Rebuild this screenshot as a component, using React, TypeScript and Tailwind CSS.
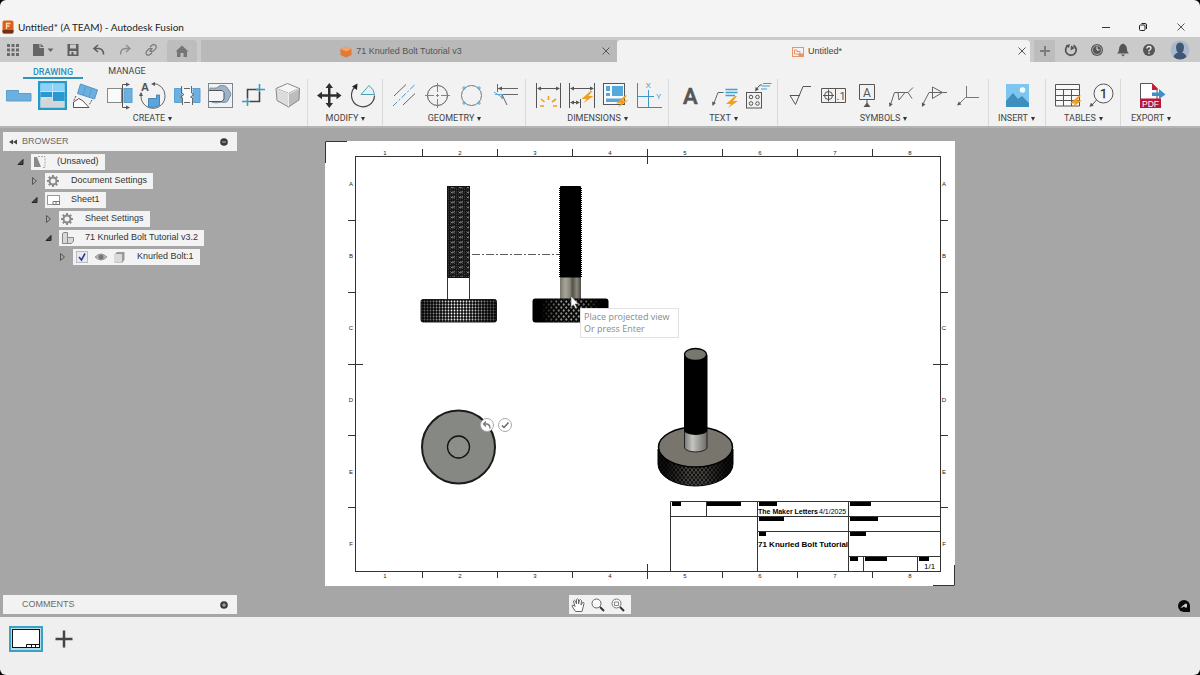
import { useState } from 'react'
import type { ReactNode } from 'react'

const ink = '#555'
const blue = '#5aa9dc'
const orange = '#f0a020'

const Glyph = ({ children }: { children: ReactNode }) => (
  <svg
    viewBox="0 0 34 34"
    className="h-[34px] w-[34px]"
    fill="none"
    stroke={ink}
    strokeWidth="1">
    {children}
  </svg>
)

const Bolt = ({ x, y }: { x: number; y: number }) => (
  <path
    transform={`translate(${x} ${y})`}
    d="M3 -6 L-6 2 L-1 2 L-4 6 L6 -1 L1 -1 L5 -6 Z"
    fill={orange}
    stroke="none"
  />
)

const Head = ({ x, y, r }: { x: number; y: number; r: number }) => (
  <path
    transform={`translate(${x} ${y}) rotate(${r})`}
    d="M0 0 L-4 -2 L-4 2 Z"
    fill={ink}
    stroke="none"
  />
)

const ribbonGroups: {
  label: string
  className: string
  tools: { name: string; icon: ReactNode }[]
}[] = [
  {
    label: 'CREATE',
    className: 'pr-px',
    tools: [
      {
        name: 'Base view',
        icon: (
          <path
            d="M6.5 11.5 H18.5 V14.5 H31 V22 H6.5 Z"
            fill="#6bb0e0"
            stroke="#5f9fcc"
          />
        ),
      },
      {
        name: 'Projected view',
        icon: (
          <g stroke="none">
            <rect x="4" y="2" width="29" height="29" fill="#219cca" />
            <rect x="6.5" y="4.5" width="24" height="24" fill="#cfe3ee" />
            <rect x="6.5" y="4.5" width="24" height="9" fill="#8fd0f6" />
            <path d="M6.5 13 H18 V18 H6.5 Z M19 13 H30.5 V22 H19 Z" fill="#2b98d2" />
            <path d="M6.5 21 H12 V19 H18 V22 H30.5 V28.5 H6.5 Z" fill="#d2d6d9" />
            <path d="M18.5 4.5 V19 M6.5 12.5 H30.5" stroke="#c3e5f8" />
          </g>
        ),
      },
      {
        name: 'Auxiliary view',
        icon: (
          <>
            <path
              d="M12.5 5 L29.5 11 L26.5 20 L9.5 14.5 Z"
              fill="#6bb0e0"
              stroke="#5496c4"
            />
            <path d="M18 7 L15 16 M24 9 L21 18" stroke="#5a9cca" />
            <path d="M8 17 L5.5 22 M24 21 L21 26" strokeDasharray="2 1" />
            <path d="M5.5 28.5 V23 L11 19.5 L15 22 L21 28.5 Z" fill="#fff" />
          </>
        ),
      },
      {
        name: 'Section view',
        icon: (
          <>
            <rect x="5.5" y="9.5" width="14" height="14" fill="#fafafa" stroke="#888" />
            <rect x="22" y="9.5" width="8" height="14" fill="#6bb0e0" stroke="#5f9fcc" />
            <path d="M26 5.5 H20.5 V28.5 H26" />
            <Head x={28} y={5.5} r={0} />
            <Head x={28} y={28.5} r={0} />
          </>
        ),
      },
      {
        name: 'Detail view',
        icon: (
          <>
            <path d="M17 4.5 A12 12 0 0 1 29 16.5 A12 12 0 1 1 5.5 14" stroke="#666" />
            <path d="M12.5 19.5 V28 Q18 29.5 23.5 26.5 V16 H20.5 V19.5 Z" fill="#5aa5dc" stroke="#4586b4" />
            <Head x={15} y={5} r={180} />
            <Head x={5} y={13} r={-90} />
            <text x="5" y="12" fontSize="11" fontWeight="700" fill={ink} stroke="none" className="font-['Liberation_Sans',sans-serif]">
              A
            </text>
          </>
        ),
      },
      {
        name: 'Break view',
        icon: (
          <>
            <path d="M4.5 9.5 H12 V23.5 H4.5 Z M22.5 9.5 H30 V23.5 H22.5 Z" fill="#6bb0e0" stroke="#5f9fcc" />
            <rect x="12.5" y="9.5" width="10" height="14" fill="#fafafa" stroke="none" />
            <path d="M11.5 7 V14 L14 15.5 L10.5 18 L12.5 19 V26 M14 9.5 H20 M14 23.5 H20 M21.5 7 V14 L24 15.5 L20.5 18 L22.5 19 V26" stroke="#666" />
          </>
        ),
      },
      {
        name: 'Breakout view',
        icon: (
          <>
            <rect x="4.5" y="4.5" width="24" height="24" stroke="#7c848c" />
            <path d="M6 9 Q14 10 15 7 Q22 5 24 10 Q29 15 25 19 Q24 25 17 23 Q10 25 6 22 Z" fill="#9cb3c8" stroke="#7690a8" />
            <path d="M5 11.5 H18 L20 13.5 V20 L18 22.5 H5" fill="#f4f4f4" />
          </>
        ),
      },
      {
        name: 'Crop view',
        icon: (
          <g strokeWidth="1.6">
            <path d="M9.5 19.5 V10.5 H20.5 M12 22.5 H21.5 V13" stroke="#444" />
            <path d="M4 22.5 H12 M9.5 19.5 V27 M21.5 5 V13 M18 10.5 H27" stroke="#3a9cc0" />
          </g>
        ),
      },
      {
        name: 'Model',
        icon: (
          <g stroke="#888" strokeLinejoin="round">
            <path d="M15.5 4.5 L27.5 9.5 L16.5 14.5 L4 9.5 Z" fill="#f6f6f6" />
            <path d="M4 9.5 L16.5 14.5 V28 L5 21.5 Z" fill="#dcdcdc" />
            <path d="M27.5 9.5 L16.5 14.5 V28 L27 21 Z" fill="#bcbcbc" />
            <path d="M4.500 10 L16.500 14.800 L27 10 M16.500 14.800 V27.500" stroke="#eee" />
          </g>
        ),
      },
    ],
  },
  {
    label: 'MODIFY',
    className: 'pl-1 pr-0.5',
    tools: [
      {
        name: 'Move',
        icon: (
          <g fill="#2e2e2e" stroke="none">
            <path d="M16 8 H18.5 V15.2 H26 V17.8 H18.5 V25 H16 V17.8 H9 V15.2 H16 Z" />
            <path d="M17.3 4 L21 9 H13.5 Z M17.3 29 L21 24 H13.5 Z M5 16.5 L10 12.7 V20.3 Z M29.5 16.5 L24.5 12.7 V20.3 Z" />
          </g>
        ),
      },
      {
        name: 'Rotate',
        icon: (
          <>
            <path d="M28.5 16.5 A11.5 11.5 0 1 1 9 8" stroke="#444" strokeWidth="1.2" />
            <path d="M15 15.5 L23 6.5 Q28 10 28.5 15.5 Z" fill="#e2f2f5" stroke="#4fa0b4" />
            <path d="M11.5 4.5 L11 11 L6 7.5 Z" fill="#222" stroke="none" />
          </>
        ),
      },
    ],
  },
  {
    label: 'GEOMETRY',
    className: 'pl-1 pr-0.5',
    tools: [
      {
        name: 'Centerline',
        icon: (
          <>
            <path d="M7 17 L19 5.5 M16 26 L28 14.5" stroke="#666" />
            <path d="M6 27 L28 5.5" stroke="#3f98c8" strokeDasharray="6 2 2 2" />
          </>
        ),
      },
      {
        name: 'Center mark',
        icon: (
          <>
            <circle cx="16.5" cy="16.5" r="10" />
            <path d="M16.5 4 V29 M4 16.5 H29" stroke="#3f98c8" strokeDasharray="9 2 3 2" />
          </>
        ),
      },
      {
        name: 'Center mark pattern',
        icon: (
          <>
            <circle cx="16.5" cy="16.5" r="10" stroke="#777" />
            <path
              d="M9 7 V11 M7 9 H11 M24 7 V11 M22 9 H26 M9 22 V26 M7 24 H11 M24 22 V26 M22 24 H26"
              stroke={blue}
            />
          </>
        ),
      },
      {
        name: 'Edge extension',
        icon: (
          <>
            <path d="M8.5 5 V13 M9 9.5 H29 M13 15.5 H29 M13 15.5 L18 26 M13 15.5 V20" stroke="#666" />
            <Head x={9} y={9.5} r={180} />
            <path d="M5 13 L14 19 M6 15.5 H14" stroke={blue} />
          </>
        ),
      },
    ],
  },
  {
    label: 'DIMENSIONS',
    className: 'pl-1 pr-0.5',
    tools: [
      {
        name: 'Dimension',
        icon: (
          <>
            <path d="M6.5 4 V29 M30.5 4 V29 M8 9.5 H29" />
            <Head x={7} y={9.5} r={180} />
            <Head x={30} y={9.5} r={0} />
            <path
              d="M10 27 H14 M11 20 L14.5 23 M18.500 17 V21 M22 23 L26 20 M23 27 H27"
              stroke={orange}
              strokeWidth="1.6"
            />
          </>
        ),
      },
      {
        name: 'Auto dimension',
        icon: (
          <>
            <path d="M5.5 4 V29 M30.5 4 V29 M7 9.5 H29 M16.5 20 V29 M8 23.5 H14" />
            <Head x={6} y={9.5} r={180} />
            <Head x={30} y={9.5} r={0} />
            <Head x={6} y={23.5} r={180} />
            <Head x={16} y={23.5} r={0} />
            <Bolt x={23.5} y={18} />
          </>
        ),
      },
      {
        name: 'Arrange dimensions',
        icon: (
          <>
            <rect x="5.5" y="4.5" width="21" height="21" fill="#fafafa" />
            <path
              d="M14 7 H25 V17 H14 Z M8 7 H12 V12 H8 Z M8 14 H12 V17 H8 Z M8 19.5 H25 V23 H8 Z"
              fill="#56a8dc"
              stroke="none"
            />
            <Bolt x={24} y={22.5} />
          </>
        ),
      },
      {
        name: 'Ordinate',
        icon: (
          <>
            <path d="M5.5 4 V28.5 H30" stroke="#777" />
            <path d="M16.5 11 V28 M6 17.5 H22" stroke="#3f98c8" />
            <g fill="#3f9fd0" stroke="none" fontSize="8" className="font-['Liberation_Sans',sans-serif]">
              <text x="13.5" y="9">X</text>
              <text x="24" y="20">Y</text>
            </g>
          </>
        ),
      },
    ],
  },
  {
    label: 'TEXT',
    className: 'pl-1 pr-0.5',
    tools: [
      {
        name: 'Text',
        icon: (
          <text x="10" y="25" fontSize="22" fontWeight="500" fill="#555" stroke="#555" strokeWidth="0.6" className="font-['Roboto',sans-serif]">
            A
          </text>
        ),
      },
      {
        name: 'Leader note',
        icon: (
          <>
            <path d="M7 24 L11 13.5 H16.5" stroke="#666" />
            <Head x={5.5} y={27} r={112} />
            <path d="M18.5 10.5 H30.5 M18.5 13.5 H30.5 M18.5 16.5 H28" stroke="#3fa0d4" strokeWidth="1.6" />
            <Bolt x={25} y={23} />
          </>
        ),
      },
      {
        name: 'Hole note',
        icon: (
          <>
            <rect x="5.5" y="13.5" width="15" height="15.5" />
            <circle cx="10" cy="18" r="1.8" />
            <circle cx="16.5" cy="18" r="1.8" />
            <circle cx="10" cy="24.5" r="1.8" />
            <circle cx="16.5" cy="24.5" r="1.8" />
            <path d="M15.5 10 L19 6 H21" />
            <Head x={14} y={12.5} r={125} />
            <path d="M22 4.5 H30.5 M21 7 H29 M20 10 H26" stroke="#3fa0d4" />
          </>
        ),
      },
    ],
  },
  {
    label: 'SYMBOLS',
    className: 'pl-1 pr-0.5',
    tools: [
      {
        name: 'Surface texture',
        icon: <path d="M8 16.5 H18 M8 16.5 L13.5 25.5 L21 7.5 H29" />,
      },
      {
        name: 'Feature control frame',
        icon: (
          <>
            <path d="M5.5 9.5 H29.5 V23.5 H5.5 Z M19.5 9.5 V23.5 M12.5 10.5 V22.5 M7 16.5 H18" />
            <circle cx="12.5" cy="16.5" r="4" />
            <text x="20.5" y="21" fontSize="11" fill={ink} stroke="none" className="font-['Roboto',sans-serif]">
              .1
            </text>
          </>
        ),
      },
      {
        name: 'Datum identifier',
        icon: (
          <>
            <path d="M9.5 5.5 H24.5 V20.5 H9.5 Z M17 20.5 V26" />
            <path d="M17 23.5 L20.5 28 H13.5 Z" fill={ink} stroke="none" />
            <text x="13" y="17.5" fontSize="12" fill={ink} stroke="none" className="font-['Roboto',sans-serif]">
              A
            </text>
          </>
        ),
      },
      {
        name: 'Welding',
        icon: (
          <>
            <path d="M7 24 L10.5 13.5 H24 L29 8.5 M24 13.5 L28 19.5 M14 13.5 L15 21 L21 13.5" stroke="#666" />
            <Head x={5.5} y={28} r={110} />
          </>
        ),
      },
      {
        name: 'Taper and slope',
        icon: (
          <>
            <path d="M5.5 24 L11 13.5 H29 M14.5 8 V19.5 L24.5 13.5 Z" stroke="#666" />
            <Head x={4} y={28} r={115} />
          </>
        ),
      },
      {
        name: 'Bend identifier',
        icon: (
          <>
            <path d="M8 24 L13.5 18.5 H27 M14.5 7 V18.5" stroke="#777" />
            <Head x={5} y={26.5} r={142} />
          </>
        ),
      },
    ],
  },
  {
    label: 'INSERT',
    className: 'px-[9px]',
    tools: [
      {
        name: 'Image',
        icon: (
          <g stroke="none">
            <rect x="6" y="5" width="23" height="23" fill="#7cc6f0" />
            <circle cx="22.5" cy="11" r="2.8" fill="#f4fbff" />
            <path d="M6 22 L13 14 L18 20 L22 17 L29 24 V28 H6 Z" fill="#3d8fc0" />
          </g>
        ),
      },
    ],
  },
  {
    label: 'TABLES',
    className: 'pl-1 pr-0.5',
    tools: [
      {
        name: 'Table',
        icon: (
          <>
            <path
              d="M5.5 5.5 H29.5 V27 H5.5 Z M5.5 10.5 H29.5 M5.5 16.5 H29.5 M5.5 21.5 H29.5 M13.5 10.5 V27 M21.5 10.5 V27"
              fill="#fafafa"
            />
            <Bolt x={26} y={22.5} />
          </>
        ),
      },
      {
        name: 'Balloon',
        icon: (
          <>
            <circle cx="19.5" cy="14.5" r="9.5" fill="#f6f6f6" />
            <path d="M12.5 21 L8 26" />
            <Head x={5.5} y={28} r={135} />
            <text x="16" y="19" fontSize="13" fill="#333" stroke="#333" strokeWidth="0.3" className="font-['Roboto',sans-serif]">
              1
            </text>
          </>
        ),
      },
    ],
  },
  {
    label: 'EXPORT',
    className: 'px-2.5',
    tools: [
      {
        name: 'Export PDF',
        icon: (
          <>
            <path d="M5.5 4.5 H17 L22 9.5 V22 H5.5 Z" fill="#fff" stroke="#555" />
            <path d="M17 4 L22.5 9.5 V11 H17 Z" fill="#c0203a" stroke="none" />
            <path d="M17 13.5 H24 V10 L30.5 15.5 L24 20 V17 H17 Z" fill="#3f8fc8" stroke="none" />
            <rect x="5" y="19.5" width="21" height="9.5" fill="#b8183a" stroke="none" />
            <text x="7" y="27.5" fontSize="8.5" fill="#fff" stroke="none" className="font-['Liberation_Sans',sans-serif]">
              PDF
            </text>
          </>
        ),
      },
    ],
  },
]

const CloseIcon = () => (
  <svg viewBox="0 0 10 10" className="size-[10px]" stroke="#555" fill="none">
    <path d="M1.5 1.5 L8.5 8.5 M8.5 1.5 L1.5 8.5" />
  </svg>
)

const TitleBar = () => (
  <header className="flex h-[37px] items-end justify-between bg-[#f4f4f4] pl-0.5">
    <div className="flex h-5 items-center gap-1">
      <svg viewBox="0 0 12 14" className="h-[14px] w-3">
        <rect x="0.5" y="0.5" width="11" height="13" rx="2" fill="#d9601c" />
        <path d="M0.5 10 H11.5 V12 Q11.5 13.5 10 13.5 H2 Q0.5 13.5 0.5 12 Z" fill="#7a2f10" />
        <path d="M4.5 9 V3.5 H8.5 M4.5 6 H7.5" stroke="#fbd9b0" strokeWidth="1.3" fill="none" />
      </svg>
      <h1 className="font-['Lato','Open_Sans',sans-serif] text-[10px] text-[#222]">
        Untitled* (A TEAM) - Autodesk Fusion
      </h1>
    </div>
    <div className="flex h-5 items-center">
      <button aria-label="Minimize" className="flex w-[37px] justify-center">
        <svg viewBox="0 0 10 10" className="size-[10px]" stroke="#333" fill="none">
          <path d="M1 5.5 H9" />
        </svg>
      </button>
      <button aria-label="Restore" className="flex w-[37px] justify-center">
        <svg viewBox="0 0 10 10" className="size-[10px]" stroke="#222" fill="none">
          <rect x="1.5" y="3" width="5.5" height="5.5" rx="1" />
          <path d="M3.5 1.5 H7 Q8.5 1.5 8.5 3 V7" />
        </svg>
      </button>
      <button aria-label="Close" className="flex w-[39px] justify-center">
        <CloseIcon />
      </button>
    </div>
  </header>
)

const quickActions: { name: string; className: string; icon: ReactNode }[] = [
  {
    name: 'Show data panel',
    className: 'w-[25px]',
    icon: (
      <path
        d="M2 2 H5 V5 H2 Z M6.5 2 H9.5 V5 H6.5 Z M11 2 H14 V5 H11 Z M2 6.5 H5 V9.5 H2 Z M6.5 6.5 H9.5 V9.5 H6.5 Z M11 6.5 H14 V9.5 H11 Z M2 11 H5 V14 H2 Z M6.5 11 H9.5 V14 H6.5 Z M11 11 H14 V14 H11 Z"
        fill="#6a6a6a"
      />
    ),
  },
  {
    name: 'File',
    className: 'w-[35px]',
    icon: (
      <>
        <path d="M-2 2 H4.5 V6 H9 V14 H-2 Z M5.5 1.5 L9 5 H5.5 Z" fill="#666" />
        <path d="M12.500 6.5 H18.500 L15.500 10 Z" fill="#666" />
      </>
    ),
  },
  {
    name: 'Save',
    className: 'w-[26px]',
    icon: (
      <path
        d="M2.5 2 H13.5 V14 H2.5 Z M5 2.5 V6.5 H11 V2.5 Z M4.5 9 V12.5 H11.5 V9 Z M6.5 10 H8.5 V12.5 H6.5 Z"
        fillRule="evenodd"
        fill="#5e5e5e"
      />
    ),
  },
  {
    name: 'Undo',
    className: 'w-[26px]',
    icon: (
      <path
        d="M7 3 L3 6.5 L7 10 M3.500 6.5 H8 Q12.500 7 12.500 12.500"
        stroke="#5e5e5e"
        strokeWidth="1.6"
      />
    ),
  },
  {
    name: 'Redo',
    className: 'w-[26px]',
    icon: (
      <path
        d="M9 3 L13 6.5 L9 10 M12.5 6.5 H8 Q3.5 7 3.5 12.5"
        stroke="#8a8a8a"
        strokeWidth="1.3"
      />
    ),
  },
  {
    name: 'Link',
    className: 'w-[26px]',
    icon: (
      <path
        d="M6.5 9.5 L9.5 6.5 M7 5 L9.5 2.8 Q11.5 2 13 3.8 Q13.8 5.5 12.5 6.8 L10 9.3 Q8.5 10 7.5 9 M9 7 Q7.5 5.8 6 6.8 L3.5 9.3 Q2.2 10.8 3.5 12.5 Q5 13.8 6.7 12.8 L9 10.8"
        stroke="#777"
        strokeWidth="1.2"
      />
    ),
  },
]

const accountActions: { name: string; icon: ReactNode }[] = [
  {
    name: 'Extensions',
    icon: (
      <>
        <path d="M10.500 3.300 A5.3 5.3 0 1 1 5 3.500" stroke="#555" strokeWidth="1.8" />
        <path d="M7.500 8.500 L8 3.500 L12 6 Z M2.500 3.500 L7 2 L6 6 Z" fill="#555" />
      </>
    ),
  },
  {
    name: 'Job status',
    icon: (
      <>
        <circle cx="8" cy="8" r="6" fill="#555" />
        <circle cx="8" cy="8" r="4.5" stroke="#bbb" strokeWidth="0.8" />
        <path d="M8 4.5 V8 H10.5" stroke="#e8e8e8" />
      </>
    ),
  },
  {
    name: 'Notifications',
    icon: (
      <path
        d="M8 1.5 Q12 3 12 7.5 Q12 10 14 11.5 H2 Q4 10 4 7.5 Q4 3 8 1.5 Z M6 12.5 H10 L8 14.5 Z"
        fill="#555"
      />
    ),
  },
  {
    name: 'Help',
    icon: (
      <>
        <circle cx="8" cy="8" r="6" fill="#555" />
        <path d="M6 6.5 Q6 4.5 8 4.5 Q10 4.5 10 6.2 Q10 7.5 8 8.5 V9.5 M8 10.5 V12" stroke="#eee" strokeWidth="1.3" />
      </>
    ),
  },
]

const DocumentTabs = () => (
  <nav className="flex h-[25px] bg-[#cacaca] font-['Liberation_Sans',sans-serif] text-[9px] text-[#555]">
    <div className="flex w-[167px] shrink-0 items-center">
      {quickActions.map((a) => (
        <button
          key={a.name}
          aria-label={a.name}
          className={`flex justify-center ${a.className}`}>
          <svg viewBox="0 0 16 16" className="size-4 overflow-visible" fill="none">
            {a.icon}
          </svg>
        </button>
      ))}
    </div>
    <button
      aria-label="Home"
      className="mt-[3px] mr-1 flex w-[30px] shrink-0 items-center justify-center rounded-t-sm bg-[#bdbdbd]">
      <svg viewBox="0 0 16 16" className="size-4" fill="#757575">
        <path d="M8 2.5 L14.5 8.5 H13 V14 H9.5 V10 H6.5 V14 H3 V8.5 H1.5 Z" />
      </svg>
    </button>
    <div className="mt-[3px] flex flex-1 items-center bg-[#b9b9b9] pr-1.5">
      <button className="flex flex-1 items-center justify-center gap-1 pt-0.5">
        <svg viewBox="0 0 12 12" className="size-3">
          <path d="M6 0.5 L11.5 3 V9 L6 11.5 L0.5 9 V3 Z" fill="#e07a34" />
          <path d="M6 0.5 L11.5 3 L6 5.5 L0.5 3 Z" fill="#f2a468" />
        </svg>
        71 Knurled Bolt Tutorial v3
      </button>
      <button aria-label="Close 71 Knurled Bolt Tutorial v3">
        <CloseIcon />
      </button>
    </div>
    <div className="mt-[3px] flex flex-1 items-center rounded-t-sm bg-[#f2f2f2] pr-[3px]">
      <button className="flex flex-1 items-center justify-center gap-1 pt-0.5 text-[#444]">
        <svg viewBox="0 0 12 12" className="size-3" fill="none" stroke="#e89468">
          <rect x="0.5" y="1.5" width="11" height="9" />
          <path d="M2.5 8 V4 H5 V5.5 H8 V8 Z" />
          <path d="M7 8 H11 V10 H7 Z" fill="#e89468" />
        </svg>
        Untitled*
      </button>
      <button aria-label="Close Untitled">
        <CloseIcon />
      </button>
    </div>
    <div className="flex w-[170px] shrink-0 items-center">
      <button
        aria-label="New tab"
        className="mt-[3px] ml-1 flex h-[22px] w-[21px] items-center justify-center self-end bg-[#bdbdbd]">
        <svg viewBox="0 0 12 12" className="size-3" stroke="#7c7c7c" strokeWidth="2">
          <path d="M6 1 V11 M1 6 H11" />
        </svg>
      </button>
      <div className="ml-[3px] flex flex-1">
        {accountActions.map((a) => (
          <button key={a.name} aria-label={a.name} className="flex w-[26px] justify-center">
            <svg viewBox="0 0 16 16" className="size-4" fill="none">
              {a.icon}
            </svg>
          </button>
        ))}
      </div>
      <button aria-label="Account" className="mr-2.5">
        <svg viewBox="0 0 20 20" className="size-5">
          <circle cx="10" cy="10" r="9.5" fill="#a9b9cc" />
          <path d="M10 2.5 Q14 3 14 7.5 Q14 11 12 12.5 Q16 14 16.5 17 Q10 22 3.5 17 Q4 14 8 12.5 Q6 11 6 7.5 Q6 3 10 2.5 Z" fill="#3f5674" />
        </svg>
      </button>
    </div>
  </nav>
)

const Ribbon = () => {
  const [active, setActive] = useState('Projected view')

  return (
    <section className="flex h-[66px] flex-col border-b-2 border-[#b4b4b4] bg-[#f2f2f2] font-['Roboto',sans-serif] text-[9px] text-[#444]">
      <div className="flex h-[17px] gap-5 pl-[23px]">
        <button className="w-[60px] border-b-2 border-[#2f93ba] pt-1 font-medium text-[#2f93ba]">
          DRAWING
        </button>
        <button className="w-12 pt-0.5">MANAGE</button>
      </div>
      <div className="flex flex-1">
        {ribbonGroups.map((g) => (
          <div
            key={g.label}
            className={`flex flex-col items-center border-r border-[#dadada] last:border-r-0 ${g.className}`}>
            <div className="flex">
              {g.tools.map((t) => (
                <button
                  key={t.name}
                  aria-label={t.name}
                  aria-pressed={active === t.name}
                  onClick={() => setActive(t.name)}>
                  <Glyph>{t.icon}</Glyph>
                </button>
              ))}
            </div>
            <button className="flex h-[11px] items-center gap-0.5">
              {g.label}
              <svg viewBox="0 0 6 6" className="size-[6px]" fill="#333">
                <path d="M1 1 H5 L3 5 Z" />
              </svg>
            </button>
          </div>
        ))}
      </div>
    </section>
  )
}

const GearIcon = (
  <>
    <circle cx="8" cy="8" r="3.5" stroke="#8a8a8a" strokeWidth="2" />
    <path
      d="M8 2 V4 M8 12 V14 M2 8 H4 M12 8 H14 M3.8 3.8 L5.2 5.2 M10.8 10.8 L12.2 12.2 M3.8 12.2 L5.2 10.8 M10.8 5.2 L12.2 3.8"
      stroke="#8a8a8a"
      strokeWidth="2"
    />
  </>
)

const treeRows: {
  label: string
  indent: string
  open: boolean
  checkable?: boolean
  icon: ReactNode
}[] = [
  {
    label: '(Unsaved)',
    indent: 'pl-[11px]',
    open: true,
    icon: (
      <>
        <path d="M3 3 H6 L10 13 H3 Z" fill="#8a8a8a" />
        <path d="M7 2.5 H14 V13.5 H11" stroke="#aaa" strokeDasharray="2 1" />
      </>
    ),
  },
  { label: 'Document Settings', indent: 'pl-[25px]', open: false, icon: GearIcon },
  {
    label: 'Sheet1',
    indent: 'pl-[25px]',
    open: true,
    icon: (
      <>
        <rect x="2.5" y="3.5" width="12" height="9" fill="#fff" stroke="#999" />
        <path d="M8 12.5 V9.5 H14.5 V12.5 Z M11 9.5 V12.5" stroke="#777" />
      </>
    ),
  },
  { label: 'Sheet Settings', indent: 'pl-[39px]', open: false, icon: GearIcon },
  {
    label: '71 Knurled Bolt Tutorial v3.2',
    indent: 'pl-[39px]',
    open: true,
    icon: (
      <path
        d="M3.5 3.5 L5 2.5 H8.5 V7.5 H14.5 V11 L12.5 13.5 H3.5 Z M8.5 7.5 V13"
        fill="#d8d8d8"
        stroke="#888"
      />
    ),
  },
  {
    label: 'Knurled Bolt:1',
    indent: 'pl-[53px]',
    open: false,
    checkable: true,
    icon: (
      <>
        <path d="M3.5 5.5 L6 3 H13.5 V10.5 L11.5 13.5 H3.5 Z" fill="#9a9a9a" />
        <rect x="3" y="5" width="8" height="8" rx="1" fill="#dadada" />
      </>
    ),
  },
]

const BrowserTree = () => {
  const [visible, setVisible] = useState(true)

  return (
    <ul className="mt-[3px] flex flex-col gap-[3px] font-['Liberation_Sans',sans-serif] text-[9px] text-[#333]">
      {treeRows.map((row) => (
        <li key={row.label} className={`flex h-4 items-center ${row.indent}`}>
          <button
            aria-label={`${row.open ? 'Collapse' : 'Expand'} ${row.label}`}
            className="w-[17px] pl-0.5">
            <svg viewBox="0 0 8 8" className="size-2" fill="none">
              {row.open ? (
                <path d="M7 1.500 V6.500 H2 Z" fill="#444" stroke="#222" />
              ) : (
                <path d="M2.500 0.5 L6.500 4 L2.500 7.5 Z" stroke="#555" />
              )}
            </svg>
          </button>
          <div className="flex h-4 items-center bg-[#f3f3f3] pr-1.5">
            {row.checkable && (
              <>
                <label className="relative mx-[3px] flex">
                  <input
                    type="checkbox"
                    aria-label={`Show ${row.label}`}
                    checked={visible}
                    onChange={() => setVisible(!visible)}
                    className="size-3 appearance-none border border-[#b8bcc4] bg-[#e8eaf2]"
                  />
                  {visible && (
                    <svg viewBox="0 0 12 12" className="pointer-events-none absolute inset-0 size-3" fill="none">
                      <path d="M3 6 L5.500 9 L9 2.5" stroke="#2c3f80" strokeWidth="1.6" />
                    </svg>
                  )}
                </label>
                <svg viewBox="0 0 16 16" className="mx-0.5 size-4" fill="none">
                  <path d="M2 8 Q8 2 14 8 Q8 14 2 8 Z" fill="#b4b4b4" stroke="#9a9a9a" />
                  <circle cx="8" cy="8" r="2.5" fill="#777" />
                </svg>
              </>
            )}
            <svg viewBox="0 0 16 16" className="mr-2.5 size-4 shrink-0" fill="none">
              {row.icon}
            </svg>
            <span className="whitespace-nowrap">{row.label}</span>
          </div>
        </li>
      ))}
    </ul>
  )
}

const columnNumbers = ['1', '2', '3', '4', '5', '6', '7', '8']
const rowLetters = ['A', 'B', 'C', 'D', 'E', 'F']
const columnTicks = [422.5, 497.5, 572.5, 722.5, 797.5, 872.5]
const rowTicks = [220.5, 292.5, 435.5, 507.5]
const redactions = [
  [672, 502, 9],
  [707, 502, 34],
  [759, 502, 18],
  [850, 502, 21],
  [759, 517, 25],
  [850, 517, 28],
  [759, 532, 7],
  [850, 532, 16],
  [850, 557, 8],
  [865, 557, 22],
  [919, 557, 10],
]

// Coordinates below are in drawing space: the sheet spans 325..955 by 141..586
const Sheet = () => (
  <svg viewBox="325 141 630 445" className="block w-full bg-white" fill="none" stroke="#333">
    <defs>
      <pattern id="thread" width="8" height="5" patternUnits="userSpaceOnUse">
        <rect width="8" height="5" fill="#141414" stroke="none" />
        <path d="M0 2 L8 0.8 M0 4.4 L8 3.2" stroke="#8a8a8a" strokeWidth="0.5" strokeDasharray="1 1" />
        <path d="M3 2.6 L7 1.8" stroke="#ccc" strokeWidth="0.6" />
      </pattern>
      <pattern id="knurl" width="3" height="3" patternUnits="userSpaceOnUse">
        <rect width="3" height="3" fill="#1a1a1a" stroke="none" />
        <path d="M1.5 0.2 L2.5 1.5 L1.5 2.8 L0.5 1.5 Z" fill="#f2f2f2" stroke="none" />
      </pattern>
      <pattern id="knurlDark" width="5" height="6" patternUnits="userSpaceOnUse">
        <rect width="5" height="6" fill="#0b0b0b" stroke="none" />
        <path d="M1.2 0 L2.5 1.5 L1.2 3 L0 1.5 Z M3.7 3 L5 4.5 L3.7 6 L2.5 4.5 Z" fill="#98968e" stroke="none" />
      </pattern>
      <pattern id="knurlIso" width="4" height="5" patternUnits="userSpaceOnUse">
        <rect width="4" height="5" fill="#0e0e0e" stroke="none" />
        <path d="M0 0 L4 5 M4 0 L0 5" stroke="#6c6a64" strokeWidth="0.7" />
      </pattern>
      <linearGradient id="steel">
        <stop offset="0" stopColor="#77756a" />
        <stop offset="0.25" stopColor="#a8a598" />
        <stop offset="0.45" stopColor="#8c897e" />
        <stop offset="0.6" stopColor="#555248" />
        <stop offset="0.8" stopColor="#8a877c" />
        <stop offset="1" stopColor="#4c4a44" />
      </linearGradient>
      <linearGradient id="neck">
        <stop offset="0" stopColor="#777" />
        <stop offset="0.35" stopColor="#c4c4c0" />
        <stop offset="1" stopColor="#6c6a64" />
      </linearGradient>
      <linearGradient id="edgeShade">
        <stop offset="0.1" stopColor="#000" />
        <stop offset="0.4" stopColor="#000" stopOpacity="0" />
        <stop offset="0.6" stopColor="#000" stopOpacity="0" />
        <stop offset="0.9" stopColor="#000" />
      </linearGradient>
    </defs>

    {/* Border, zones and centring marks */}
    <path d="M325.5 163 V141.5 H347 M954.5 565 V585.5 H933" />
    <rect x="355.5" y="156.5" width="585" height="415" />
    <path d="M647.5 149 V164 M647.5 564 V579 M348 364.5 H363 M933 364.5 H948" />
    {columnTicks.map((x) => (
      <path key={x} d={`M${x} 149 V156 M${x} 571 V578`} />
    ))}
    {rowTicks.map((y) => (
      <path key={y} d={`M348 ${y} H355 M941 ${y} H948`} />
    ))}
    <g fill="#222" stroke="none" fontSize="6" textAnchor="middle" className="font-['Liberation_Sans',sans-serif]">
      {columnNumbers.map((n, i) => (
        <g key={n}>
          <text x={385 + i * 75} y="155">{n}</text>
          <text x={385 + i * 75} y="578">{n}</text>
        </g>
      ))}
      {rowLetters.map((n, i) => (
        <g key={n}>
          <text x="351" y={186 + i * 72}>{n}</text>
          <text x="944" y={186 + i * 72}>{n}</text>
        </g>
      ))}
    </g>

    {/* Front view, hidden lines */}
    <rect x="447.5" y="186.5" width="22" height="91" fill="url(#thread)" stroke="#111" />
    <path d="M447.5 277 V300 M469.5 277 V300" />
    <rect x="421" y="299.5" width="75.5" height="22.5" rx="2" fill="url(#knurl)" stroke="#222" />
    <rect x="421" y="299.5" width="75.5" height="22.5" rx="2" fill="url(#edgeShade)" fillOpacity="0.6" stroke="none" />

    <path d="M472 254.5 H560" strokeDasharray="8 2 2 2" strokeWidth="0.8" />

    {/* Projected side view, shaded */}
    <path d="M559.5 188 V277 M581.5 188 V277" stroke="#000" strokeDasharray="1 1" />
    <rect x="560" y="186" width="21" height="92" rx="1" fill="#000" stroke="none" />
    <rect x="560" y="277.5" width="21" height="22" fill="url(#steel)" stroke="none" />
    <rect x="533" y="299" width="75" height="23" rx="2" fill="url(#knurlDark)" stroke="none" />
    <rect x="533" y="299" width="75" height="23" rx="2" fill="url(#edgeShade)" stroke="#000" />

    {/* Top view */}
    <circle cx="458.5" cy="447" r="36.5" fill="#858883" stroke="#1c1c1c" strokeWidth="2" />
    <circle cx="458.5" cy="447" r="11" fill="#8b8e89" stroke="#111" strokeWidth="1.3" />

    {/* Isometric view */}
    <path d="M658 449 V464 A37.5 22 0 0 0 733 464 V449 Z" fill="url(#knurlIso)" stroke="#000" />
    <path d="M658 449 V464 A37.5 22 0 0 0 733 464 V449 Z" fill="url(#edgeShade)" fillOpacity="0.8" stroke="none" />
    <ellipse cx="695.5" cy="447" rx="37" ry="20" fill="#77756c" stroke="#000" strokeWidth="1.5" />
    <path d="M684.5 430 V448 A11.5 5 0 0 0 707 448 V430 Z" fill="url(#neck)" stroke="#222" />
    <path d="M684 355 V430 A11.5 5 0 0 0 707.5 430 V355 Z" fill="#000" stroke="none" />
    <ellipse cx="695.5" cy="354.5" rx="11" ry="6" fill="#777770" stroke="#000" strokeWidth="1.3" />

    {/* Title block */}
    <path d="M670.5 571 V501.5 H940 M670.5 516.5 H940 M757.5 531.5 H940 M848.5 556.5 H940 M706.5 501 V516 M757.5 501 V571 M848.5 501 V571 M863.5 557 V571 M917.5 557 V571" />
    {redactions.map(([x, y, w]) => (
      <rect key={`${x}-${y}`} x={x} y={y} width={w} height="4" fill="#000" stroke="none" />
    ))}
    <g fill="#000" stroke="none" className="font-['Liberation_Sans',sans-serif]">
      <text x="758" y="514" fontSize="7" fontWeight="700">The Maker Letters</text>
      <text x="819" y="514" fontSize="7">4/1/2025</text>
      <text x="758" y="547" fontSize="8" fontWeight="700">71 Knurled Bolt Tutorial</text>
      <text x="924" y="569" fontSize="8">1/1</text>
    </g>

    {/* Pointer */}
    <path d="M571 296 V307 L573.5 304.8 L575.5 308.5 L577 307.8 L575.2 304 H578.5 Z" fill="#fff" stroke="#555" strokeWidth="0.6" />
  </svg>
)

const PanelHeader = ({ title, collapsible }: { title: string; collapsible?: boolean }) => (
  <div className="flex h-[19px] items-center bg-[#f2f2f2] pr-[9px]">
    <div className="flex w-[19px] justify-center">
      {collapsible && (
        <svg viewBox="0 0 8 6" className="h-[6px] w-2" fill="#444">
          <path d="M4 0.5 V5.5 L0 3 Z M8 0.5 V5.5 L4 3 Z" />
        </svg>
      )}
    </div>
    <h2 className="flex-1 font-['Liberation_Sans',sans-serif] text-[9px] text-[#6a6a6a]">{title}</h2>
    <button aria-label={`${title} options`}>
      <svg viewBox="0 0 8 8" className="size-2">
        <circle cx="4" cy="4" r="3.8" fill="#3a3a3a" />
        <path d={collapsible ? 'M2 4 H6' : 'M2 4 H6 M4 2 V6'} stroke="#bbb" />
      </svg>
    </button>
  </div>
)

const Canvas = () => (
  <main className="relative flex flex-1 bg-[#a6a6a6]">
    <aside className="flex w-[237px] shrink-0 flex-col justify-between py-[3px] pl-[3px]">
      <div className="pt-px">
        <PanelHeader title="BROWSER" collapsible />
        <BrowserTree />
      </div>
      <PanelHeader title="COMMENTS" />
    </aside>

    <div className="relative mt-[13px] mr-[245px] ml-[88px] flex-1 self-start">
      <Sheet />
      <div className="absolute top-[167px] left-[255px] border border-[#e2e2e2] bg-white px-[3px] py-0.5 pr-2 font-['Open_Sans','Noto_Sans',sans-serif] text-[9px] leading-3 whitespace-nowrap text-[#8a8a8a]">
        <p>Place projected view</p>
        <p>Or press Enter</p>
      </div>
      <div className="absolute top-[277px] left-[155px] flex gap-1">
        <button aria-label="Undo placement" className="rounded-full border border-[#aaa] bg-white">
          <svg viewBox="0 0 12 12" className="size-3" fill="none" stroke="#777" strokeWidth="1.3">
            <path d="M5 2.5 L2.5 5 L5 7.5 M3 5 H6 Q9 5.5 9 9.5" />
          </svg>
        </button>
        <button aria-label="Finish placement" className="rounded-full border border-[#aaa] bg-white">
          <svg viewBox="0 0 12 12" className="size-3" fill="none" stroke="#666" strokeWidth="1.5">
            <path d="M3 6.5 L5 8.5 L9.5 3.5" />
          </svg>
        </button>
      </div>
    </div>

    <div className="absolute bottom-[3px] left-1/2 flex h-[19px] w-[62px] -translate-x-1/2 items-center gap-1 bg-[#f2f2f2] pl-px">
      <button aria-label="Pan">
        <svg viewBox="0 0 16 16" className="size-4" fill="#fff" stroke="#666">
          <path d="M5.5 14.5 L2 9 Q2 7.5 4 8.5 L5 9.5 L3.5 4 Q4.5 2.5 5.5 4 L6.5 7 V2.5 Q7.5 1 8.5 2.5 V7 L9.5 3 Q10.8 2 11.5 3.5 L11 8 L12.5 5.5 Q14 5 14 6.5 L12 14.5 Z" />
        </svg>
      </button>
      <button aria-label="Zoom">
        <svg viewBox="0 0 16 16" className="size-4" fill="none" stroke="#666">
          <circle cx="6.5" cy="6.5" r="4.5" fill="#fafafa" />
          <path d="M10 10 L14 14" stroke="#333" strokeWidth="2" />
        </svg>
      </button>
      <button aria-label="Zoom window">
        <svg viewBox="0 0 16 16" className="size-4" fill="none" stroke="#777">
          <circle cx="6.5" cy="6.5" r="4.5" fill="#fafafa" />
          <path d="M4.5 5 H8.5 V8.5 H4.5 Z" stroke="#888" />
          <path d="M10 10 L14 14" stroke="#333" strokeWidth="2" />
        </svg>
      </button>
    </div>

    <button aria-label="Assistant" className="absolute right-2.5 bottom-[5px]">
      <svg viewBox="0 0 12 12" className="size-3">
        <path d="M6 0 A6 6 0 0 1 12 6 V12 H6 A6 6 0 0 1 6 0 Z" fill="#0a0a0a" />
        <path d="M2.5 7.5 L7.5 3.5 L9 4 V7.5 H7 L6 6.5 L4.5 7.5 Z" fill="#ccc" />
      </svg>
    </button>
  </main>
)

const SheetStrip = () => (
  <footer className="flex h-[58px] items-start gap-3 bg-[#efefef] px-[9px] pt-[9px]">
    <button aria-label="Sheet1" className="h-[26px] w-[34px] border-2 border-[#3aa0c4] bg-[#b8dce8]">
      <svg viewBox="0 0 30 22" className="h-[22px] w-[30px]" fill="#fff" stroke="#111">
        <rect x="1.5" y="1.5" width="27" height="18" />
        <path d="M15.5 19 V16.5 H28 M20.5 16.5 V19 M24.5 16.5 V19" />
      </svg>
    </button>
    <button aria-label="Add sheet" className="mt-1">
      <svg viewBox="0 0 18 18" className="size-[18px]" stroke="#444" strokeWidth="2.5">
        <path d="M9 0.5 V17.5 M0.5 9 H17.5" />
      </svg>
    </button>
  </footer>
)

export default function App() {
  return (
    <div className="bg-black">
      <div className="flex min-h-screen flex-col overflow-hidden rounded-md">
        <TitleBar />
        <DocumentTabs />
        <Ribbon />
        <Canvas />
        <SheetStrip />
      </div>
    </div>
  )
}
